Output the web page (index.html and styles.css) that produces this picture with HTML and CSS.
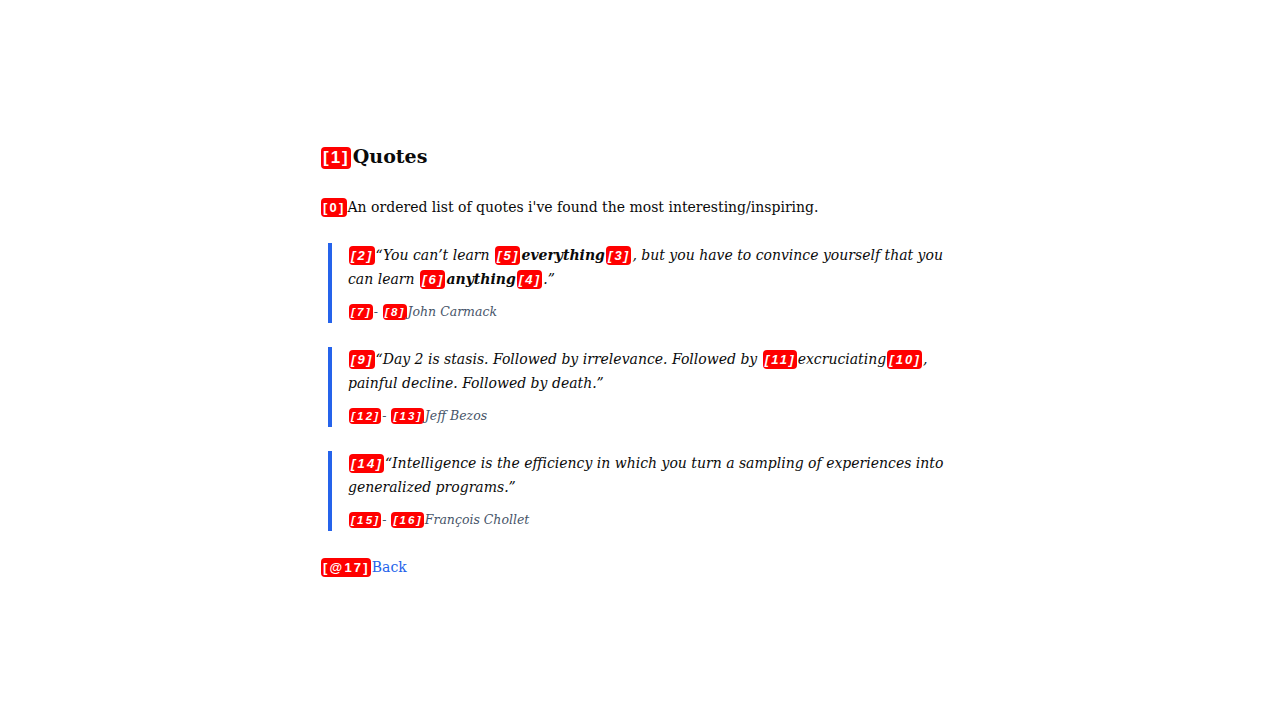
FILE: index.html
```html
<!DOCTYPE html>
<html>
<head>
<meta charset="utf-8">
<link rel="stylesheet" href="styles.css">
</head>
<body>
<main class="page">
  <h1 class="title"><span class="tag">[1]</span>Quotes</h1>
  <p class="intro"><span class="tag">[0]</span>An ordered list of quotes i've found the most interesting/inspiring.</p>
  <blockquote class="quote">
    <p class="text"><span class="tag">[2]</span>“You can’t learn <span class="tag">[5]</span><b>everything</b><span class="tag">[3]</span>, but you have to convince yourself that you can learn <span class="tag">[6]</span><b>anything</b><span class="tag">[4]</span>.”</p>
    <p class="author"><span class="tag">[7]</span>- <span class="tag">[8]</span>John Carmack</p>
  </blockquote>
  <blockquote class="quote">
    <p class="text"><span class="tag">[9]</span>“Day 2 is stasis. Followed by irrelevance. Followed by <span class="tag">[11]</span>excruciating<span class="tag">[10]</span>, painful decline. Followed by death.”</p>
    <p class="author"><span class="tag">[12]</span>- <span class="tag">[13]</span>Jeff Bezos</p>
  </blockquote>
  <blockquote class="quote">
    <p class="text"><span class="tag">[14]</span>“Intelligence is the efficiency in which you turn a sampling of experiences into generalized programs.”</p>
    <p class="author"><span class="tag">[15]</span>- <span class="tag">[16]</span>François Chollet</p>
  </blockquote>
  <p class="back"><span class="tag">[@17]</span><a href="#" class="link">Back</a></p>
</main>
</body>
</html>
```
FILE: styles.css
```css
html, body {
  margin: 0;
  padding: 0;
  background: #ffffff;
}
body {
  font-family: "DejaVu Serif", Georgia, serif;
  font-size: 14px;
  color: #0a0a0a;
}
.page {
  width: 640px;
  margin: 0 auto;
  padding-top: 144px;
}
.title {
  font-size: 19px;
  font-weight: bold;
  line-height: 24px;
  margin: 0 0 26px 0;
}
.intro {
  margin: 0 0 24px 0;
  line-height: 24px;
}
.quote {
  margin: 0 0 24px 8px;
  border-left: 4px solid #2563eb;
  padding: 0 0 0 16px;
}
.text {
  margin: 0;
  font-style: italic;
  line-height: 24px;
}
.author {
  margin: 10px 0 0 0;
  font-style: italic;
  font-size: 12.5px;
  line-height: 22px;
  color: #475569;
}
.back {
  margin: 0;
  line-height: 24px;
}
.link {
  color: #2563eb;
  text-decoration: none;
}
.tag {
  display: inline-block;
  background: #ff0000;
  color: #ffffff;
  font-family: "Liberation Sans", Arial, sans-serif;
  font-weight: bold;
  font-style: normal;
  font-size: 13px;
  letter-spacing: 2.2px;
  line-height: 19px;
  padding: 0 1px 0 2px;
  margin: 0 1px;
  border-radius: 4px;
  vertical-align: 0;
}
.text .tag,
.author .tag {
  font-style: italic;
}
.title .tag {
  font-size: 17px;
  line-height: 22px;
  letter-spacing: 2px;
  margin-right: 2px;
}
.author .tag {
  font-size: 11.5px;
  line-height: 16px;
  letter-spacing: 2.2px;
}
```
